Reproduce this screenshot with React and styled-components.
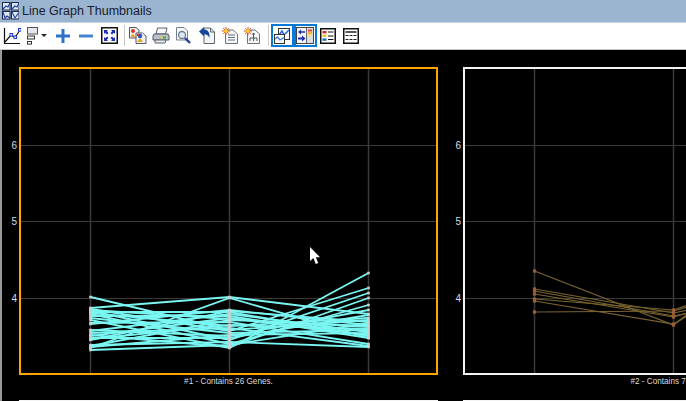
import React from "react";
import styled, { createGlobalStyle } from "styled-components";

const Global = createGlobalStyle`
  html, body { margin: 0; padding: 0; background: #000; overflow: hidden; }
  #root { height: 401px; }
`;
const Page = styled.div`
  display: flex; flex-direction: column; width: 686px; height: 401px; overflow: hidden;
  font-family: "Liberation Sans", sans-serif;
`;
const TitleBar = styled.header`
  display: flex; align-items: center; gap: 3px; height: 22px; padding-left: 2px;
  background: #9bb4d0; border-bottom: 1px solid #c5d3e3; flex: none;
`;
const TitleText = styled.h1`
  margin: 0; font-size: 12.5px; font-weight: 400; color: #14202e; line-height: 22px;
`;
const Toolbar = styled.nav`
  display: flex; align-items: center; height: 25px; padding-bottom: 1px; background: #fff; flex: none;
  border-bottom: 1px solid #c9c9c9;
`;
const Slot = styled.button`
  display: flex; align-items: center; justify-content: center; flex: none; padding: 0; margin: 0;
  width: ${p => p.$w || 23}px; height: 23px; background: none; box-sizing: border-box;
  border: ${p => (p.$active ? "2px solid #0a7ad6" : "none")};
`;
const ToggleGroup = styled.div`display: flex;`;
const Divider = styled.span`
  flex: none; width: 1px; height: 21px; background: #c8c8c8; margin: 0 ${p => p.$r || 2}px 0 ${p => p.$l || 3}px;
`;
const Canvas = styled.main`
  flex: 1; min-height: 0; background: #000; border-left: 2px solid #9a9a9a; overflow: hidden;
  padding-top: 17px; display: grid; grid-template-columns: 436px 436px; column-gap: 8px; grid-auto-rows: 333px;
`;
const Figure = styled.figure`
  margin: 0; display: grid; grid-template-columns: 17px 419px; grid-template-rows: 308px 25px;
`;
const Axis = styled.div`position: relative;`;
const Tick = styled.span`
  position: absolute; right: 2px; transform: translateY(-50%);
  font: 10px "Liberation Sans", sans-serif; color: #d6dde8;
`;
const Plot = styled.div`
  box-sizing: border-box; width: 419px; height: 308px; border: 2px solid ${p => p.$color};
  background: #000;
`;
const PlotSvg = styled.svg`display: block; overflow: hidden;`;
const Caption = styled.figcaption`
  grid-column: 2; text-align: center; padding-top: 1px; white-space: nowrap;
  font: 8.2px/12px "Liberation Sans", sans-serif; color: #dcdcdc;
`;

const X = [69, 208, 347, 486];
const GRID_Y = [76, 152, 229];
const TICKS = [[6, 78], [5, 154], [4, 231]];
const Y0 = 69;

const cyan = [
  [297,330,320],[308,297,314],[309,331,288],[310,319,327],[311,340,293],[312,312,336],[313,326,318],
  [314,344,305],[316,316,338],[318,333,330],[320,348,273],[323,322,344],[324,310,325],[330,336,310],
  [331,314,332],[333,328,346],[335,347,298],[336,318,335],[338,338,315],[339,325,329],[340,311,322],
  [345,342,347],[346,320,326],[347,335,333],[348,298,338],[350,345,323],
];
const brown = [
  [271,325,218],[289,313,285],[291,316,290],[294,317,278],[299,310,262],[301,324,240],[312,311,270],
];

function Chart({ color, caption, lines, lineColor, dotColor, lineWidth, dotSize }) {
  return (
    <Figure>
      <Axis>{TICKS.map(([v, t]) => <Tick key={v} style={{ top: t }}>{v}</Tick>)}</Axis>
      <Plot $color={color}>
        <PlotSvg width="415" height="304" viewBox="0 0 415 304">
          {X.slice(0, 3).map(x => <line key={x} x1={x + .5} x2={x + .5} y1="0" y2="304" stroke="#3a3a3a" strokeWidth="1.5" />)}
          {GRID_Y.map(y => <line key={y} x1="0" x2="415" y1={y + .5} y2={y + .5} stroke="#3a3a3a" />)}
          {lines.map((l, i) => (
            <polyline key={i} fill="none" stroke={lineColor} strokeWidth={lineWidth}
              points={l.map((y, j) => `${X[j] + .5},${y - Y0}`).join(" ")} />
          ))}
          {lines.map((l, i) => l.map((y, j) => (
            <rect key={`${i}-${j}`} x={X[j] + .5 - dotSize / 2} y={y - Y0 - dotSize / 2} width={dotSize} height={dotSize} fill={dotColor} />
          )))}
        </PlotSvg>
      </Plot>
      <Caption>{caption}</Caption>
    </Figure>
  );
}

const NextFrame = styled.div`
  margin-left: 17px; width: 419px; height: 308px; box-sizing: border-box; border: 2px solid #f4f4f4;
`;
const Pointer = styled.svg`
  position: absolute; left: 309px; top: 246px; pointer-events: none;
`;

const WindowIcon = () => (
  <svg width="17" height="18" viewBox="0 0 17 18">
    {[[0,0,"M1 7L4 4L6 5L8 1"],[9,0,"M1 7L4 4L6 5L8 1"],[0,9,"M1 1L3 7L5 5L8 7"],[9,9,"M1 1L4 7L6 4L8 2"]].map(([x,y,d],i) => (
      <g key={i} transform={`translate(${x} ${y})`}>
        <rect x=".5" y=".5" width="7.5" height="7.5" fill="#dfe7f1" stroke="#1d2a45" />
        <path d={d} fill="none" stroke="#1c3fa8" strokeWidth="1.1" />
      </g>
    ))}
  </svg>
);
const LineIcon = () => (
  <svg width="18" height="18" viewBox="0 0 18 18">
    <path d="M1.5 1V16.5H17" fill="none" stroke="#111" strokeWidth="1.2" />
    <path d="M2 15L8 8L12 10.5L17 3" fill="none" stroke="#111" strokeWidth="1.2" />
    {[[7,6.5],[11,9],[15.5,1.5]].map(([x,y]) => <rect key={x} x={x} y={y} width="2.6" height="2.6" fill="#fff" stroke="#1a35d0" strokeWidth="1" />)}
  </svg>
);
const LayoutIcon = () => (
  <svg width="22" height="20" viewBox="0 0 22 20">
    <rect x="1.5" y="1.5" width="10" height="6.5" fill="#e3e8ee" stroke="#555" />
    <rect x="1.5" y="10" width="7" height="3" fill="#fff" stroke="#333" />
    <rect x="1.5" y="15.5" width="4" height="2.6" fill="#fff" stroke="#333" />
    <path d="M15 8H21L18 11Z" fill="#222" />
  </svg>
);
const PlusIcon = () => (
  <svg width="16" height="16" viewBox="0 0 16 16"><path d="M6.5 1H9.5V6.5H15V9.5H9.5V15H6.5V9.5H1V6.5H6.5Z" fill="#2d72c9" /></svg>
);
const MinusIcon = () => (
  <svg width="16" height="16" viewBox="0 0 16 16"><rect x="1" y="6.5" width="14" height="3" fill="#4683cf" /></svg>
);
const FitIcon = () => (
  <svg width="17" height="17" viewBox="0 0 17 17">
    <rect x=".75" y=".75" width="15.5" height="15.5" fill="#fff" stroke="#111" strokeWidth="1.5" />
    <path d="M3 3H7L5.8 4.2L7.5 6L6 7.5L4.2 5.8L3 7ZM14 3V7L12.8 5.8L11 7.5L9.5 6L11.2 4.2L10 3ZM3 14V10L4.2 11.2L6 9.5L7.5 11L5.8 12.8L7 14ZM14 14H10L11.2 12.8L9.5 11L11 9.5L12.8 11.2L14 10Z" fill="#1a2fb8" />
  </svg>
);
const CopyIcon = () => (
  <svg width="18" height="17" viewBox="0 0 18 17">
    <path d="M.5.5H7L10 3V11H.5Z" fill="#f3f3ee" stroke="#556" />
    <path d="M7 6H13.5L17 9V16.5H7Z" fill="#f6f6f2" stroke="#556" />
    <circle cx="4" cy="4" r="2" fill="#d8342a" /><path d="M3 6.5L7 10H2Z" fill="#e6a020" />
    <circle cx="11" cy="9" r="2.3" fill="#2858c8" /><path d="M11 11L14 15H8Z" fill="#e6a020" /><rect x="8" y="7" width="2" height="2" fill="#d8342a" />
  </svg>
);
const PrintIcon = () => (
  <svg width="18" height="17" viewBox="0 0 18 17">
    <path d="M5.5 1H15L13.5 7H4Z" fill="#f4f6f8" stroke="#5a6570" />
    <path d="M2 7H16L17 9V13H1V9Z" fill="#b9c2ca" stroke="#4d5862" />
    <path d="M3 13H14L13 16H3Z" fill="#e8ecef" stroke="#5a6570" />
    <rect x="11" y="9.5" width="3" height="2" fill="#3fae3a" /><rect x="8.5" y="9.5" width="2" height="2" fill="#e7c93b" />
  </svg>
);
const PreviewIcon = () => (
  <svg width="17" height="18" viewBox="0 0 17 18">
    <path d="M1.5.5H9L12.5 4V13H1.5Z" fill="#f6f7f8" stroke="#77818c" />
    <circle cx="7" cy="8" r="3.5" fill="#d9e8f3" stroke="#6e8090" strokeWidth="1.3" />
    <path d="M10 11L15 16" stroke="#1f3c9c" strokeWidth="2.4" />
  </svg>
);
const UndoIcon = () => (
  <svg width="16" height="17" viewBox="0 0 16 17">
    <path d="M5 1H11.5L15.5 5V16.5H5Z" fill="#f4f5f6" stroke="#5c6772" />
    <path d="M11.5 1V5H15.5" fill="none" stroke="#5c6772" />
    <path d="M0 4.5L5 0V2.5C9 2.5 11 5.5 10.5 11C9.5 8.5 8 7.3 5 7.2V9.5Z" fill="#14499a" />
  </svg>
);
const Spark = () => (
  <g>
    <path d="M4 0V8M0 4H8M1.2 1.2L6.8 6.8M6.8 1.2L1.2 6.8" stroke="#e5421c" strokeWidth="1" />
    <circle cx="4" cy="4" r="1.9" fill="#f8d020" />
  </g>
);
const NewDocIcon = () => (
  <svg width="16" height="17" viewBox="0 0 16 17">
    <path d="M3.5 3H11L15.5 7V16.5H3.5Z" fill="#f3f5f7" stroke="#6a7580" />
    <path d="M6 8H13M6 10.5H13M6 13H13" stroke="#66727e" />
    <Spark />
  </svg>
);
const NewTreeIcon = () => (
  <svg width="16" height="17" viewBox="0 0 16 17">
    <path d="M3.5 3H11L15.5 7V16.5H3.5Z" fill="#f3f5f7" stroke="#6a7580" />
    <path d="M9.5 6.5V10M6 14V11H13V14M9.5 10V14" fill="none" stroke="#4d5862" />
    <rect x="8.5" y="6" width="2" height="2" fill="#4d5862" />
    <Spark />
  </svg>
);
const GraphsIcon = () => (
  <svg width="16" height="16" viewBox="0 0 16 16">
    <rect x="4.5" y=".5" width="11" height="11" fill="#fff" stroke="#333" />
    <path d="M5 7L8 3L10 7L12 5L15 2" fill="none" stroke="#2666d8" strokeWidth="1.5" />
    <rect x=".5" y="6.5" width="10" height="9" fill="#fff" stroke="#333" />
    <path d="M1 11L3.5 9L6 12L10 9.5" fill="none" stroke="#3578dd" strokeWidth="1.3" />
  </svg>
);
const PanelIcon = () => (
  <svg width="18" height="17" viewBox="0 0 18 17">
    <rect x=".5" y=".5" width="17" height="16" fill="#f2f4f6" stroke="#444" />
    <rect x="10.5" y="1" width="6.5" height="15" fill="#d9dfe5" />
    <path d="M10.5 1V16" stroke="#667" />
    <path d="M2 5L5 2.5V4.3H9V5.7H5V7.5Z" fill="#1e2fb0" />
    <path d="M9.5 11.5L6 8.5V10.5H2V12.5H6V14.5Z" fill="#1e2fb0" />
    <rect x="12" y="2.5" width="4" height="2" fill="#e64a24" /><rect x="12" y="5" width="4" height="2" fill="#f3b52b" />
    <rect x="12" y="7.5" width="4" height="2" fill="#f6df6a" />
  </svg>
);
const ListIcon = () => (
  <svg width="16" height="16" viewBox="0 0 16 16">
    <rect x=".75" y=".75" width="14.5" height="14.5" fill="#fff" stroke="#111" strokeWidth="1.5" />
    <rect x="2.5" y="3" width="4" height="2.4" fill="#d9281e" /><rect x="2.5" y="6.6" width="4" height="2.4" fill="#f2c21e" /><rect x="2.5" y="10.4" width="4" height="2.4" fill="#1a6fc4" />
    <path d="M8 4H13.5M8 8H13.5M8 11.5H13.5" stroke="#111" />
  </svg>
);
const TableIcon = () => (
  <svg width="16" height="16" viewBox="0 0 16 16">
    <rect x=".75" y=".75" width="14.5" height="14.5" fill="#fff" stroke="#111" strokeWidth="1.5" />
    <path d="M2.5 4H13.5" stroke="#111" strokeWidth="1.4" />
    <path d="M2.5 7.5H13.5M2.5 11.5H13.5" stroke="#222" strokeWidth="1.2" strokeDasharray="3 1" />
  </svg>
);

export default function App() {
  return (
    <Page>
      <Global />
      <TitleBar><WindowIcon /><TitleText>Line Graph Thumbnails</TitleText></TitleBar>
      <Toolbar>
        <Slot><LineIcon /></Slot>
        <Slot $w={28}><LayoutIcon /></Slot>
        <Slot><PlusIcon /></Slot>
        <Slot><MinusIcon /></Slot>
        <Slot $w={24}><FitIcon /></Slot>
        <Divider />
        <Slot $w={22.8}><CopyIcon /></Slot>
        <Slot $w={22.8}><PrintIcon /></Slot>
        <Slot $w={22.8}><PreviewIcon /></Slot>
        <Slot $w={22.8}><UndoIcon /></Slot>
        <Slot $w={22.8}><NewDocIcon /></Slot>
        <Slot $w={22.8}><NewTreeIcon /></Slot>
        <Divider $l={4} $r={2} />
        <ToggleGroup>
          <Slot $active><GraphsIcon /></Slot>
          <Slot $active><PanelIcon /></Slot>
        </ToggleGroup>
        <Slot><ListIcon /></Slot>
        <Slot><TableIcon /></Slot>
      </Toolbar>
      <Canvas>
        <Chart color="#ffa500" caption="#1 - Contains 26 Genes." lines={cyan} lineColor="#7af6f2" dotColor="#c9d2d2" lineWidth={1.8} dotSize={2.6} />
        <Chart color="#f4f4f4" caption="#2 - Contains 7 Genes." lines={brown} lineColor="#7a6430" dotColor="#9a5f38" lineWidth={1.2} dotSize={3.2} />
        <NextFrame />
        <NextFrame />
      </Canvas>
      <Pointer width="12" height="19" viewBox="0 0 12 19">
        <path d="M1 1V15L4.4 12L6.8 18L9.2 17L6.8 11.2H11Z" fill="#fff" />
      </Pointer>
    </Page>
  );
}
